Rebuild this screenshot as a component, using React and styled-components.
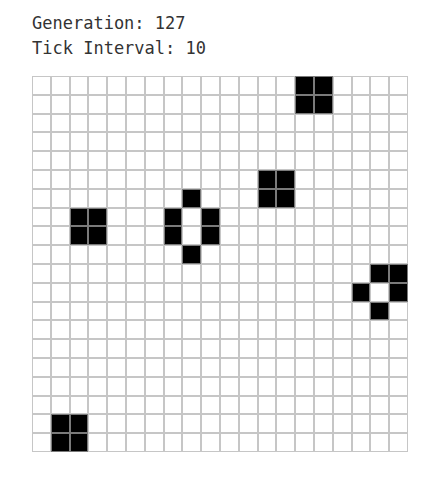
import React from 'react';
import styled, { createGlobalStyle } from 'styled-components';

const SIZE = 20;

const alive = new Set([
  '0,14', '0,15', '1,14', '1,15',
  '5,12', '5,13', '6,12', '6,13',
  '7,2', '7,3', '8,2', '8,3',
  '6,8', '7,7', '7,9', '8,7', '8,9', '9,8',
  '10,18', '10,19', '11,17', '11,19', '12,18',
  '18,1', '18,2', '19,1', '19,2',
]);

const GlobalStyle = createGlobalStyle`
  body {
    margin: 0;
    background: #fff;
  }
`;

const Page = styled.div`
  padding: 11px 0 0 32px;
`;

const Stats = styled.div`
  font-family: "DejaVu Sans Mono", "Liberation Mono", monospace;
  font-size: 17px;
  line-height: 25px;
  color: #333;
`;

const Board = styled.div`
  margin-top: 15px;
  display: grid;
  grid-template-columns: repeat(${SIZE}, 1fr);
  grid-template-rows: repeat(${SIZE}, 1fr);
  width: 376px;
  height: 376px;
`;

const Cell = styled.div`
  box-sizing: border-box;
  border: 1px solid #c6c6c6;
  background: ${(p) => (p.$alive ? '#000' : '#fff')};
  border-color: ${(p) => (p.$alive ? '#7a7a7a' : '#c6c6c6')};
`;

export default function App() {
  const cells = [];
  for (let r = 0; r < SIZE; r++) {
    for (let c = 0; c < SIZE; c++) {
      cells.push(<Cell key={`${r}-${c}`} $alive={alive.has(`${r},${c}`)} />);
    }
  }
  return (
    <>
      <GlobalStyle />
      <Page>
        <Stats>
          <div>Generation: 127</div>
          <div>Tick Interval: 10</div>
        </Stats>
        <Board>{cells}</Board>
      </Page>
    </>
  );
}
